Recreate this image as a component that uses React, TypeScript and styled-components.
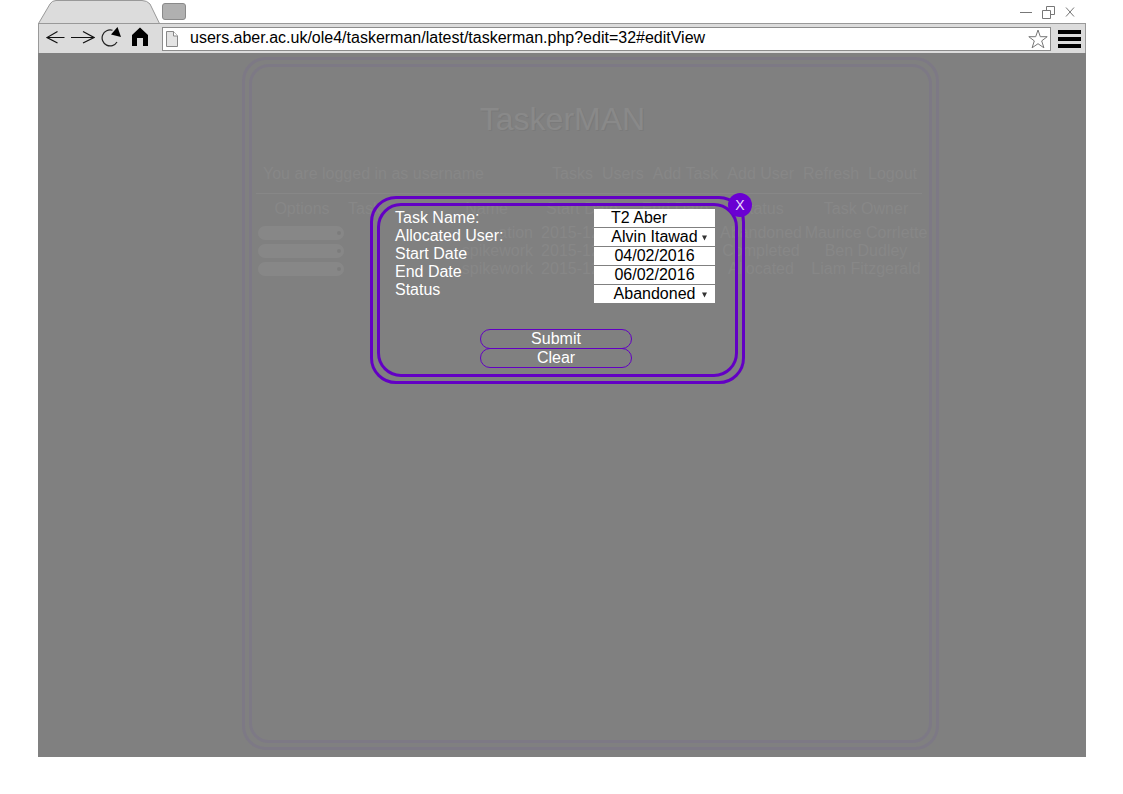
import React from "react";
import styled, { createGlobalStyle } from "styled-components";

const PURPLE = "#6300c4";
const GREY = "#808080";
const FAINT = "#878787";
const FAINT_PURPLE = "#7d7985";

const GlobalStyle = createGlobalStyle`
  *, *::before, *::after { box-sizing: border-box; }
  body {
    margin: 0;
    background: #fff;
    font-family: "Liberation Sans", Arial, sans-serif;
    font-size: 16px;
    line-height: 18px;
  }
  button, input, select { font: inherit; color: inherit; margin: 0; padding: 0; border: 0; background: none; }
`;

const BrowserWindow = styled.div`
  display: flex;
  flex-direction: column;
  min-height: 100vh;
  padding: 0 37px 37px 38px;
`;

const TabStrip = styled.header`
  display: flex;
  height: 24px;
`;

const TabShape = styled.svg`
  display: block;
  flex: none;
`;

const NewTabButton = styled.button`
  width: 24px;
  height: 17px;
  margin: 3px 0 0 2px;
  background: #b0b0b0;
  border: 1px solid #8a8a8a;
  border-radius: 3px;
`;

const WindowControls = styled.div`
  display: flex;
  align-items: center;
  gap: 9px;
  margin-left: auto;
  padding-right: 10px;
`;

const IconButton = styled.button`
  display: flex;
  flex: none;
`;

const Toolbar = styled.div`
  display: flex;
  align-items: center;
  height: 30px;
  margin-top: -1px;
  padding: 0 4px 0 7px;
  background: #dcdcdc;
  border: 1px solid #999;
  border-bottom: 0;
`;

const NavButtons = styled.div`
  display: flex;
  align-items: center;
  gap: 6px;
  width: 116px;
  padding-bottom: 3px;
`;

const AddressBar = styled.div`
  display: flex;
  flex: 1;
  align-items: center;
  height: 24px;
  padding: 0 2px 0 3px;
  margin-right: 7px;
  background: #fff;
  border: 1px solid #8c8c8c;
`;

const AddressInput = styled.input`
  flex: 1;
  min-width: 0;
  height: 20px;
  margin-left: 12px;
  padding-bottom: 2px;
  color: #000;
  outline: 0;
`;

const Viewport = styled.main`
  position: relative;
  display: flex;
  flex: 1;
  padding: 4px 147px 7px 204px;
  background: ${GREY};
`;

const PageFrame = styled.div`
  display: flex;
  flex: 1;
  min-width: 0;
  padding: 4px;
  border: 3px solid ${FAINT_PURPLE};
  border-radius: 24px;
`;

const PageBody = styled.div`
  flex: 1;
  min-width: 0;
  padding: 0 0 0 4px;
  border: 3px solid ${FAINT_PURPLE};
  border-radius: 20px;
  color: ${FAINT};
`;

const Title = styled.h1`
  margin: 34px 60px 0 0;
  font-size: 32px;
  line-height: 36px;
  font-weight: 400;
  text-align: center;
  color: #898989;
  text-shadow: 1px 1px 0 #7a7a7a;
`;

const Menu = styled.nav`
  display: flex;
  gap: 9px;
  margin-right: 7px;
  padding: 28px 5px 10px 7px;
  border-bottom: 1px solid ${FAINT};
`;

const Greeting = styled.span`
  margin-right: auto;
`;

const MenuLink = styled.a`
  color: inherit;
  text-decoration: none;
`;

const TaskTable = styled.table`
  width: 100%;
  margin-top: 6px;
  table-layout: fixed;
  border-collapse: collapse;
  white-space: nowrap;
`;

const HeadCell = styled.th<{ $width?: number; $align?: string; $end?: number }>`
  width: ${(p) => (p.$width ? `${p.$width}px` : "auto")};
  height: 24px;
  padding: 0 ${(p) => p.$end ?? 0}px 6px 0;
  font-weight: 400;
  text-align: ${(p) => p.$align ?? "center"};
`;

const Cell = styled.td<{ $align?: string }>`
  height: 18px;
  padding: 0;
  text-align: ${(p) => p.$align ?? "center"};
`;

const OptionsButton = styled.button`
  display: flex;
  align-items: center;
  justify-content: flex-end;
  width: 86px;
  height: 14px;
  margin-left: 2px;
  padding-right: 3px;
  background: ${FAINT};
  border-radius: 7px;

  &::after {
    content: "";
    width: 4px;
    height: 4px;
    border-radius: 2px;
    background: #7c7c7c;
  }
`;

const Overlay = styled.div`
  position: absolute;
  inset: 0;
  display: flex;
  align-items: flex-start;
  justify-content: center;
  padding: 143px 9px 0 0;
`;

const Dialog = styled.section`
  position: relative;
  width: 375px;
  padding: 4px;
  border: 3px solid ${PURPLE};
  border-radius: 26px;
`;

const DialogForm = styled.form`
  padding: 3px 20px 6px 15px;
  border: 3px solid ${PURPLE};
  border-radius: 24px;
  color: #fff;
`;

const Fields = styled.div`
  display: flex;
  justify-content: space-between;
`;

const Labels = styled.div`
  display: flex;
  flex-direction: column;
`;

const Controls = styled.div`
  display: flex;
  flex-direction: column;
  width: 121px;
  background: #fff;
  color: #000;
`;

const TextField = styled.input<{ $align: string }>`
  width: 100%;
  height: 19px;
  padding: 0 ${(p) => (p.$align === "left" ? "0 0 17px" : "0")};
  text-align: ${(p) => p.$align};
  border-bottom: 1px solid ${GREY};
  outline: 0;
`;

const SelectWrap = styled.div`
  position: relative;
  height: 18px;

  &:not(:last-child) {
    height: 19px;
    border-bottom: 1px solid ${GREY};
  }
`;

const SelectField = styled.select`
  display: block;
  width: 100%;
  height: 18px;
  appearance: none;
  text-align: center;
  text-align-last: center;
  outline: 0;
`;

const Arrow = styled.svg`
  position: absolute;
  top: 7px;
  right: 8px;
  pointer-events: none;
`;

const Actions = styled.div`
  display: flex;
  flex-direction: column;
  align-items: center;
  margin-top: 26px;
  padding-left: 2px;
`;

const ActionButton = styled.button`
  width: 152px;
  height: 20px;
  line-height: 18px;
  border: 1px solid ${PURPLE};
  border-radius: 10px;

  & + & { margin-top: -1px; }
`;

const CloseButton = styled.button`
  position: absolute;
  top: -6px;
  right: -10px;
  width: 24px;
  height: 24px;
  border-radius: 50%;
  background: #6a00d2;
  color: #eadcff;
  font-size: 14px;
  line-height: 24px;
  text-align: center;
`;

const tasks = [
  { name: "ation", start: "2015-12-01", status: "Abandoned", owner: "Maurice Corrlette" },
  { name: "spikework", start: "2015-12-01", status: "Completed", owner: "Ben Dudley" },
  { name: "spikework", start: "2015-12-01", status: "Allocated", owner: "Liam Fitzgerald" },
];

function SelectBox({ id, value }: { id: string; value: string }) {
  return (
    <SelectWrap>
      <SelectField id={id} defaultValue={value}>
        <option>{value}</option>
      </SelectField>
      <Arrow width="5" height="6" viewBox="0 0 5 6">
        <path d="M0 0.5h5L2.5 5.5z" fill="#333" />
      </Arrow>
    </SelectWrap>
  );
}

function BrowserChrome() {
  return (
    <>
      <TabStrip>
        <TabShape width="122" height="24" viewBox="0 0 122 24">
          <path
            d="M0.5 24V23.5L12 4Q14 .5 18 .5H104Q109 .5 112 4L121.5 23.5V24z"
            fill="#dcdcdc"
          />
          <path
            d="M0.5 24V23.5L12 4Q14 .5 18 .5H104Q109 .5 112 4L121.5 23.5"
            fill="none"
            stroke="#999"
          />
        </TabShape>
        <NewTabButton aria-label="New tab" />
        <WindowControls>
          <IconButton aria-label="Minimise">
            <svg width="14" height="14" viewBox="0 0 14 14" stroke="#777" fill="none">
              <path d="M1 7.5h12" />
            </svg>
          </IconButton>
          <IconButton aria-label="Restore">
            <svg width="13" height="13" viewBox="0 0 13 13" stroke="#777" fill="#fff">
              <path d="M4.500.5h8v8h-8z" />
              <path d="M.5 4.500h8v8h-8z" />
            </svg>
          </IconButton>
          <IconButton aria-label="Close window">
            <svg width="12" height="12" viewBox="0 0 12 12" stroke="#777" fill="none">
              <path d="M2 1.500l8 9M10 1.500l-8 9" />
            </svg>
          </IconButton>
        </WindowControls>
      </TabStrip>
      <Toolbar>
        <NavButtons>
          <IconButton aria-label="Back">
            <svg width="19" height="14" viewBox="0 0 19 14" stroke="#111" strokeWidth="1.2" fill="none">
              <path d="M18.500 7.500H1M11.500 1.500L1 7.500l10.500 5.500" />
            </svg>
          </IconButton>
          <IconButton aria-label="Forward">
            <svg width="24" height="14" viewBox="0 0 24 14" stroke="#111" strokeWidth="1.2" fill="none">
              <path d="M0 7.500h22.500M12 1.500L23 7.500 12 13" />
            </svg>
          </IconButton>
          <IconButton aria-label="Reload">
            <svg width="21" height="22" viewBox="0 0 21 22">
              <path d="M11.500 4.300A8 8 0 1 0 16 16" stroke="#222" strokeWidth="1.2" fill="none" />
              <path d="M16.500 1L20 11 10 8.500z" fill="#000" />
            </svg>
          </IconButton>
          <IconButton aria-label="Home">
            <svg width="26" height="20" viewBox="0 0 26 20">
              <path d="M4 8L12 0.500l8 7.500V19h-5v-8H9v8H4z" fill="#000" />
            </svg>
          </IconButton>
        </NavButtons>
        <AddressBar>
          <svg width="12" height="16" viewBox="0 0 12 16" fill="#e4e4e4" stroke="#888">
            <path d="M.5.5H7.500L11.500 5V15.500H.5z" />
            <path d="M7.500.5V5h4" fill="#fff" />
          </svg>
          <AddressInput
            aria-label="Address"
            defaultValue="users.aber.ac.uk/ole4/taskerman/latest/taskerman.php?edit=32#editView"
          />
          <IconButton aria-label="Bookmark">
            <svg width="20" height="20" viewBox="0 0 20 20" fill="none" stroke="#777">
              <path d="M10 1l2.300 6.700H19.200L13.700 11.900l2.200 6.900L10 14.700l-5.900 4.100 2.200-6.900L.8 7.700H7.700z" />
            </svg>
          </IconButton>
        </AddressBar>
        <IconButton aria-label="Browser menu">
          <svg width="23" height="18" viewBox="0 0 23 18">
            <path d="M0 0h23v4H0zM0 7h23v4H0zM0 14h23v4H0z" fill="#000" />
          </svg>
        </IconButton>
      </Toolbar>
    </>
  );
}

function TaskPage() {
  return (
    <PageFrame>
      <PageBody>
        <Title>TaskerMAN</Title>
        <Menu>
          <Greeting>You are logged in as username</Greeting>
          {["Tasks", "Users", "Add Task", "Add User", "Refresh", "Logout"].map((item) => (
            <MenuLink key={item} href="#">
              {item}
            </MenuLink>
          ))}
        </Menu>
        <TaskTable>
          <thead>
            <tr>
              <HeadCell $width={92}>Options</HeadCell>
              <HeadCell $width={73} $align="left">Task</HeadCell>
              <HeadCell $width={112} $align="right" $end={25}>Name</HeadCell>
              <HeadCell $width={98}>Start Date</HeadCell>
              <HeadCell $width={88}>End Date</HeadCell>
              <HeadCell $width={84}>Status</HeadCell>
              <HeadCell>Task Owner</HeadCell>
            </tr>
          </thead>
          <tbody>
            {tasks.map((task, index) => (
              <tr key={index}>
                <Cell $align="left">
                  <OptionsButton aria-label="Task options" />
                </Cell>
                <Cell />
                <Cell $align="right">{task.name}</Cell>
                <Cell>{task.start}</Cell>
                <Cell />
                <Cell>{task.status}</Cell>
                <Cell>{task.owner}</Cell>
              </tr>
            ))}
          </tbody>
        </TaskTable>
      </PageBody>
    </PageFrame>
  );
}

function EditDialog() {
  return (
    <Overlay>
      <Dialog role="dialog" aria-label="Edit task">
        <DialogForm onSubmit={(event) => event.preventDefault()}>
          <Fields>
            <Labels>
              <label htmlFor="task-name">Task Name:</label>
              <label htmlFor="user">Allocated User:</label>
              <label htmlFor="start">Start Date</label>
              <label htmlFor="end">End Date</label>
              <label htmlFor="status">Status</label>
            </Labels>
            <Controls>
              <TextField id="task-name" $align="left" defaultValue="T2 Aber" />
              <SelectBox id="user" value="Alvin Itawad" />
              <TextField id="start" $align="center" defaultValue="04/02/2016" />
              <TextField id="end" $align="center" defaultValue="06/02/2016" />
              <SelectBox id="status" value="Abandoned" />
            </Controls>
          </Fields>
          <Actions>
            <ActionButton type="submit">Submit</ActionButton>
            <ActionButton type="reset">Clear</ActionButton>
          </Actions>
        </DialogForm>
        <CloseButton aria-label="Close">X</CloseButton>
      </Dialog>
    </Overlay>
  );
}

export default function App() {
  return (
    <BrowserWindow>
      <GlobalStyle />
      <BrowserChrome />
      <Viewport>
        <TaskPage />
        <EditDialog />
      </Viewport>
    </BrowserWindow>
  );
}
